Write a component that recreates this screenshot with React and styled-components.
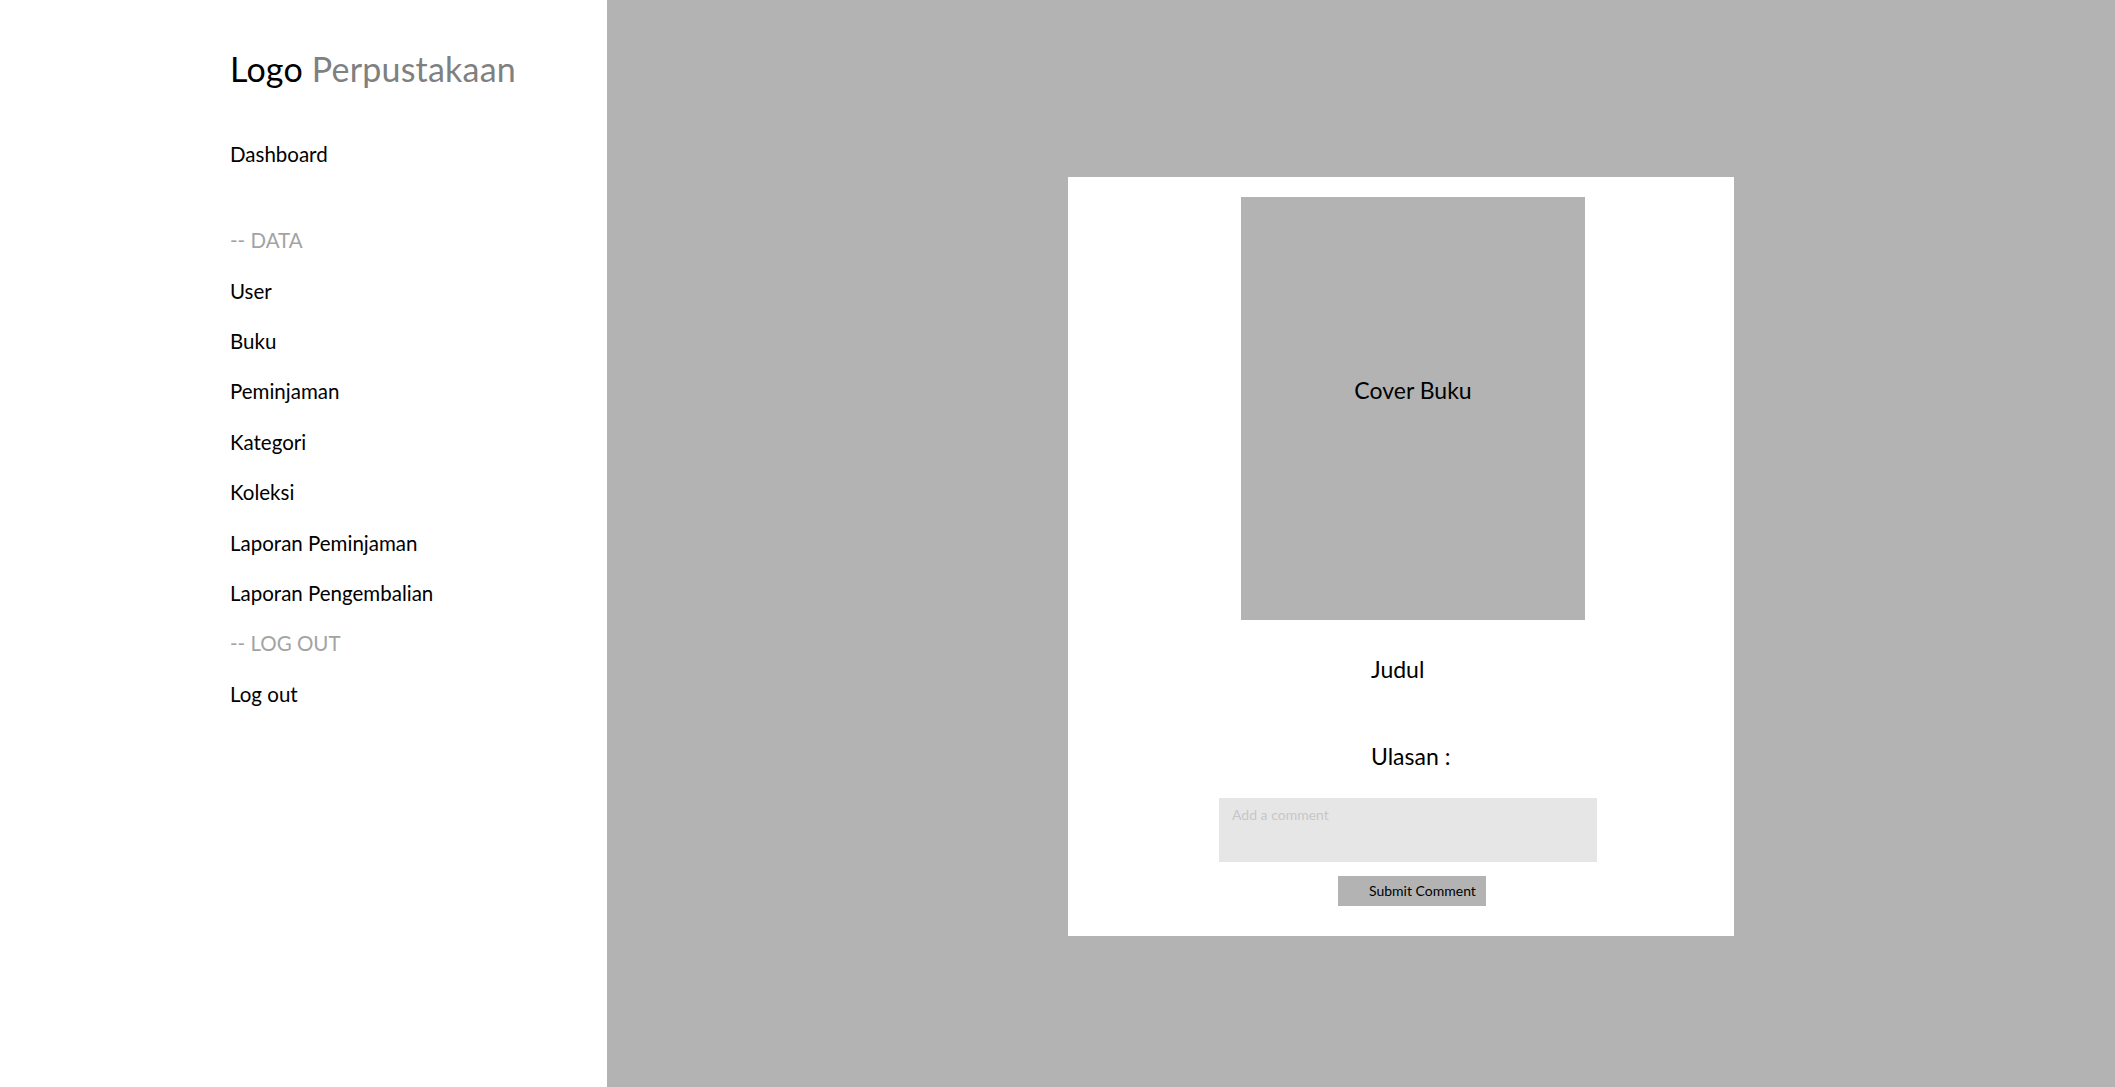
import styled, { createGlobalStyle } from "styled-components";

const GlobalStyle = createGlobalStyle`
  html, body {
    margin: 0;
    padding: 0;
    background: #b3b3b3;
  }
  body {
    font-family: Lato, "Open Sans", "Liberation Sans", sans-serif;
    color: #000;
  }
  * {
    box-sizing: border-box;
  }
`;

const Layout = styled.div`
  display: flex;
  width: 2115px;
  height: 1087px;
  overflow: hidden;
`;

const Sidebar = styled.aside`
  width: 607px;
  flex-shrink: 0;
  background: #fff;
  padding: 49px 0 0 230px;
  display: flex;
  flex-direction: column;
`;

const Brand = styled.h1`
  margin: 0 0 39px;
  font-size: 34px;
  font-weight: 400;
  line-height: 1.2;
  white-space: nowrap;
  letter-spacing: 0.2px;

  span {
    color: #808080;
  }
`;

const NavItem = styled.a`
  display: block;
  height: 50.4px;
  line-height: 50px;
  font-size: 20.5px;
  color: ${(p) => (p.$muted ? "#a3a3a3" : "#000")};
  text-decoration: none;
  white-space: nowrap;
  margin-bottom: ${(p) => (p.$gap ? "36px" : "0")};
`;

const Main = styled.main`
  flex: 1;
  background: #b3b3b3;
  padding: 177px 0 0 461px;
`;

const Card = styled.section`
  width: 666px;
  height: 759px;
  background: #fff;
  padding-top: 20px;
  display: flex;
  flex-direction: column;
  align-items: flex-start;
`;

const Cover = styled.div`
  width: 344px;
  height: 423px;
  margin-left: 173px;
  background: #b3b3b3;
  padding-top: 180px;
  text-align: center;
  font-size: 23px;
  line-height: 1.2;
`;

const Heading = styled.h2`
  margin: ${(p) => p.$top}px 0 0 303px;
  font-size: 23px;
  font-weight: 400;
  line-height: 1.2;
`;

const CommentBox = styled.textarea`
  width: 378px;
  height: 64px;
  margin: 28px 0 0 151px;
  background: #e6e6e6;
  border: none;
  outline: none;
  resize: none;
  padding: 9px 13px;
  font-family: Lato, "Open Sans", sans-serif;
  font-size: 14px;
  line-height: 1.2;
  color: #333;

  &::placeholder {
    color: #c6c6c6;
  }
`;

const SubmitButton = styled.button`
  width: 148px;
  height: 30px;
  margin: 14px 0 0 270px;
  border: none;
  background: #b3b3b3;
  padding: 0 0 0 31px;
  text-align: left;
  font-family: Lato, "Open Sans", sans-serif;
  font-size: 14px;
  line-height: 30px;
  color: #000;
  cursor: pointer;
`;

const menu = [
  { label: "Dashboard", gap: true },
  { label: "-- DATA", muted: true },
  { label: "User" },
  { label: "Buku" },
  { label: "Peminjaman" },
  { label: "Kategori" },
  { label: "Koleksi" },
  { label: "Laporan Peminjaman" },
  { label: "Laporan Pengembalian" },
  { label: "-- LOG OUT", muted: true },
  { label: "Log out" },
];

export default function App() {
  return (
    <>
      <GlobalStyle />
      <Layout>
        <Sidebar>
          <Brand>
            Logo <span>Perpustakaan</span>
          </Brand>
          {menu.map((item) => (
            <NavItem key={item.label} $muted={item.muted} $gap={item.gap}>
              {item.label}
            </NavItem>
          ))}
        </Sidebar>

        <Main>
          <Card>
            <Cover>Cover Buku</Cover>
            <Heading $top={36}>Judul</Heading>
            <Heading $top={59}>Ulasan :</Heading>
            <CommentBox placeholder="Add a comment" />
            <SubmitButton>Submit Comment</SubmitButton>
          </Card>
        </Main>
      </Layout>
    </>
  );
}
